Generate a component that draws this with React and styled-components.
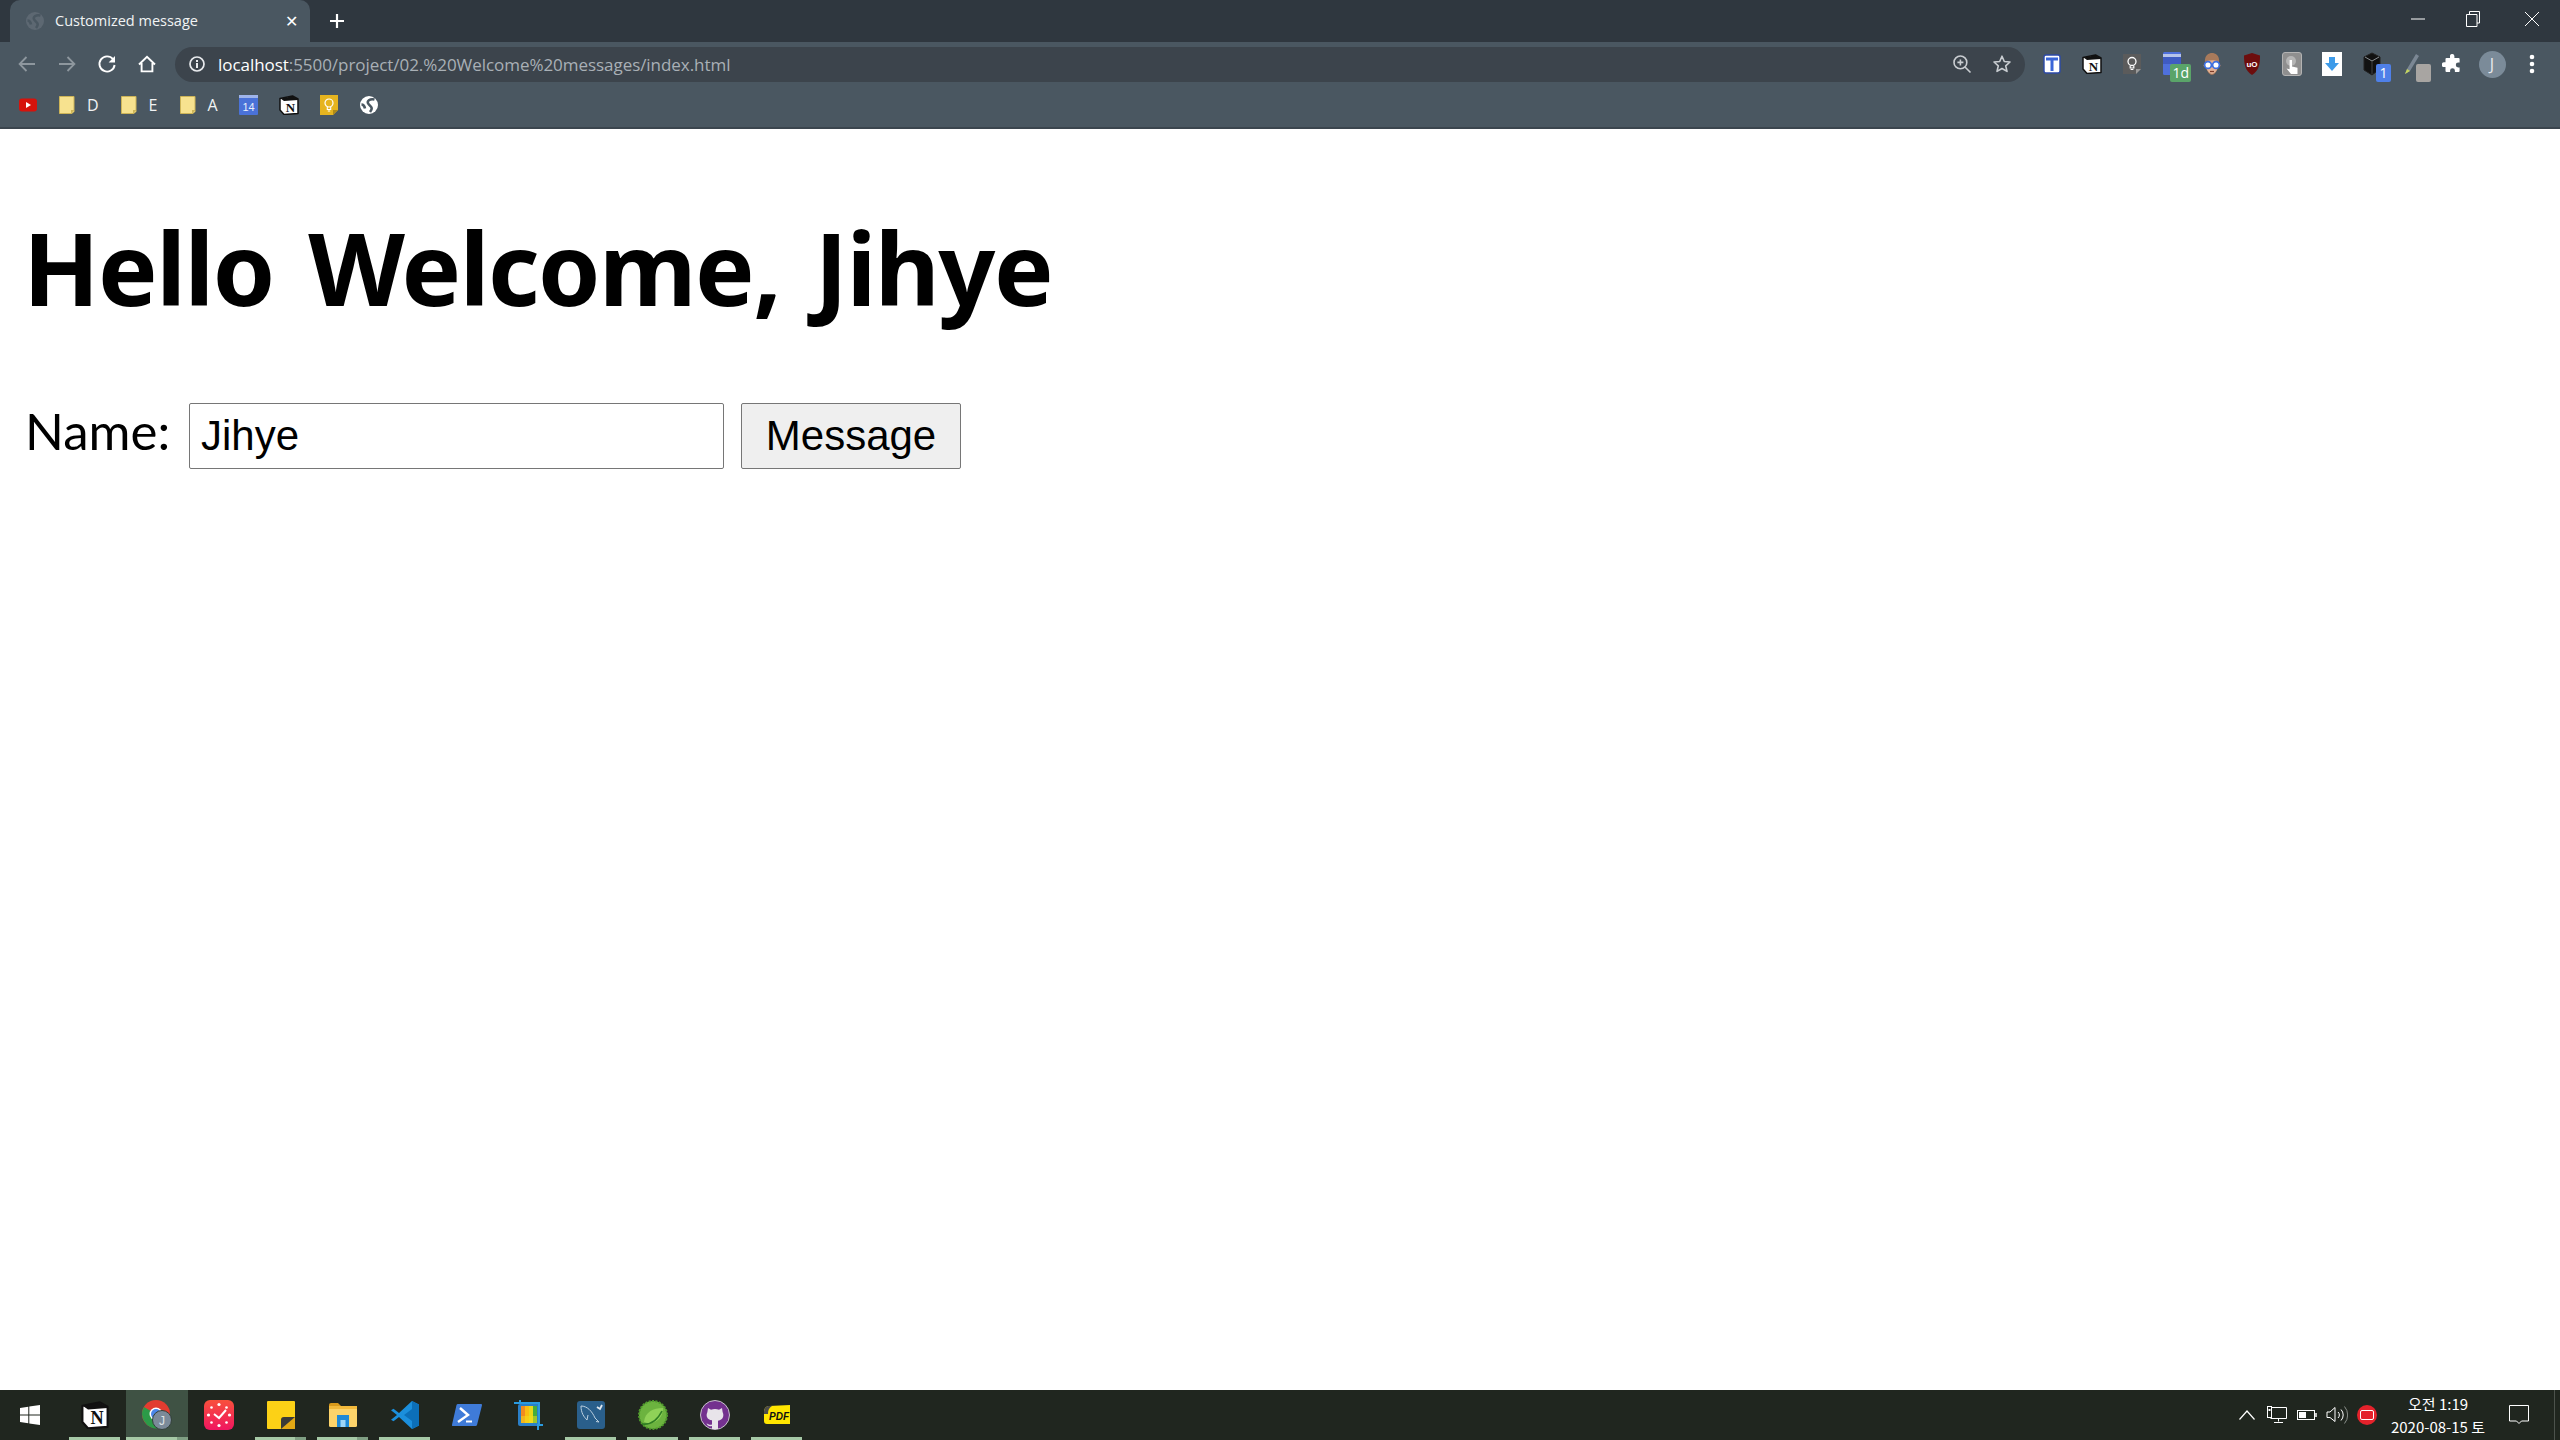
import React from 'react';
import styled, { createGlobalStyle } from 'styled-components';

const GlobalStyle = createGlobalStyle`
  html, body {
    margin: 0;
    padding: 0;
    background: #fff;
  }
  * {
    box-sizing: border-box;
  }
`;

const uiFont = `"Open Sans", "Noto Sans", "Noto Sans CJK KR", sans-serif`;

const Globe = ({ color = '#fff', land = '#4a5761' }) => (
  <svg width="18" height="18" viewBox="0 0 18 18">
    <circle cx="9" cy="9" r="9" fill={color} />
    <path d="M14.500 3.500C10 2.500 6 5 8.500 8s5 3.500 1.500 8M1.500 8.500c2 0 3 1.500 3.500 4" fill="none" stroke={land} strokeWidth="2.600" />
  </svg>
);

const NotionLogo = ({ size = 20 }) => (
  <svg width={size} height={size} viewBox="0 0 20 20">
    <path d="M1 3.500L13.500 1 19 4v14.500l-14 1L1 15z" fill="#fff" stroke="#111" strokeWidth="1.500" strokeLinejoin="round" />
    <path d="M1.500 3.500L5 6l14-1V4.200L13.500 1.200z" fill="#111" />
    <text x="11.500" y="16.500" textAnchor="middle" fontFamily="Liberation Serif, serif" fontWeight="700" fontSize="13" fill="#111">N</text>
  </svg>
);

const BackIcon = () => (
  <svg width="20" height="20" viewBox="0 0 20 20" fill="none" stroke="#8e979e" strokeWidth="1.800">
    <path d="M18 10H3M9.500 3L2.600 10l6.900 7" />
  </svg>
);

const ForwardIcon = () => (
  <svg width="20" height="20" viewBox="0 0 20 20" fill="none" stroke="#8e979e" strokeWidth="1.800">
    <path d="M2 10h15M10.500 3l6.900 7-6.900 7" />
  </svg>
);

const ReloadIcon = () => (
  <svg width="20" height="20" viewBox="0 0 20 20" fill="none">
    <path d="M16 5.200A7.600 7.600 0 1 0 17.600 11" stroke="#fff" strokeWidth="1.900" />
    <path d="M18 2v6.400h-6.400z" fill="#fff" />
  </svg>
);

const HomeIcon = () => (
  <svg width="20" height="20" viewBox="0 0 20 20" fill="none" stroke="#fff" strokeWidth="1.900">
    <path d="M2 10.500L10 2.800l8 7.700M4.600 9v8.400h10.800V9" />
  </svg>
);

const InfoIcon = () => (
  <svg width="18" height="18" viewBox="0 0 18 18" fill="none">
    <circle cx="9" cy="9" r="7" stroke="#e8eaed" strokeWidth="1.700" />
    <rect x="8" y="8" width="2" height="5" fill="#e8eaed" />
    <rect x="8" y="5" width="2" height="2" fill="#e8eaed" />
  </svg>
);

const ZoomIcon = () => (
  <svg width="20" height="20" viewBox="0 0 20 20" fill="none" stroke="#c9cdd1" strokeWidth="1.600">
    <circle cx="8.400" cy="8.400" r="6.400" />
    <path d="M13 13l5.500 5.500M5.400 8.400h6M8.400 5.400v6" />
  </svg>
);

const StarIcon = () => (
  <svg width="20" height="20" viewBox="0 0 20 20" fill="none" stroke="#c9cdd1" strokeWidth="1.600">
    <path d="M10 2.200l2.300 5.300 5.700.5-4.300 3.800 1.300 5.600L10 14.500l-5 2.900 1.300-5.600L2 8l5.700-.5z" strokeLinejoin="round" />
  </svg>
);

const TExtension = () => (
  <svg width="18" height="20" viewBox="0 0 18 20">
    <rect x="1" y="1" width="16" height="18" rx="2" fill="#fff" stroke="#2c4aa8" strokeWidth="1.400" />
    <path d="M3 3.500h12v3h-4.500V17h-3V6.500H3z" fill="#3b66d8" />
  </svg>
);

const KeepExtension = () => (
  <svg width="20" height="22" viewBox="0 0 20 22">
    <path d="M1 1h18v15l-5 5H1z" fill="#5b5b5b" />
    <path d="M14 21v-5h5z" fill="#9a9a9a" />
    <circle cx="10" cy="8.500" r="4" fill="none" stroke="#fff" strokeWidth="1.300" />
    <path d="M8.200 12.500v2.500h3.600v-2.500M8.600 16.500h2.800" fill="none" stroke="#fff" strokeWidth="1.200" />
  </svg>
);

const CalendarExtension = () => (
  <svg width="20" height="24" viewBox="0 0 20 24">
    <rect x="1" y="0" width="18" height="23" rx="1.500" fill="#4f70dc" />
    <rect x="1" y="2" width="18" height="3" fill="#b6c3ea" />
    <rect x="1" y="5" width="18" height="7" fill="#3f5bc2" />
  </svg>
);

const GlassesExtension = () => (
  <svg width="20" height="24" viewBox="0 0 20 24">
    <path d="M3 11C2 3 7 1 10 1s8 2 7 10l2 3-3 1c-1 5-4 8-6 8s-5-3-6-8l-3-1z" fill="#a87a5b" />
    <path d="M5 9c3-1 8-1 10 0l1 6c-1 4-4 7-6 7s-5-3-6-7z" fill="#e3b093" />
    <circle cx="6" cy="13" r="3.400" fill="#fff" stroke="#3d6fe0" strokeWidth="1.700" />
    <circle cx="14" cy="13" r="3.400" fill="#fff" stroke="#3d6fe0" strokeWidth="1.700" />
    <path d="M8 19.500h4" stroke="#7d3d2a" strokeWidth="1.200" />
  </svg>
);

const UblockExtension = () => (
  <svg width="18" height="24" viewBox="0 0 18 24">
    <path d="M9 1l8 2.600C17 12 16 19 9 23 2 19 1 12 1 3.600z" fill="#6d0d0d" />
    <text x="9" y="15" textAnchor="middle" fontFamily="Liberation Sans, sans-serif" fontWeight="700" fontSize="8" fill="#fff">uO</text>
  </svg>
);

const TouchExtension = () => (
  <svg width="20" height="24" viewBox="0 0 20 24">
    <rect x="0.500" y="0.500" width="19" height="23" rx="2.500" fill="#8f8f8f" stroke="#b3b3b3" />
    <circle cx="9" cy="9" r="5" fill="#b5b5b5" />
    <path d="M7.600 8h2.400v6.500l5.500 1.200V22H9l-4.500-5.500 3.100.8z" fill="#fff" />
  </svg>
);

const DownloadExtension = () => (
  <svg width="20" height="24" viewBox="0 0 20 24">
    <rect width="20" height="24" fill="#fff" />
    <path d="M7 5h6v6h4l-7 8-7-8h4z" fill="#3d9be9" />
  </svg>
);

const CubeExtension = () => (
  <svg width="18" height="24" viewBox="0 0 18 24">
    <path d="M9 1l8 4v12l-8 6-8-5V5z" fill="#111" stroke="#222" />
    <path d="M2 5l7 4 7-4" fill="none" stroke="#8a8f94" strokeWidth="1" />
    <path d="M9 9v13" stroke="#444" />
  </svg>
);

const PenExtension = () => (
  <svg width="16" height="24" viewBox="0 0 16 24">
    <path d="M1 22l2-5L12 2l3 2-9 15z" fill="#7b8794" />
    <path d="M1 22l2-5 3 2z" fill="#c6d65c" />
  </svg>
);

const PuzzleIcon = () => (
  <svg width="20" height="20" viewBox="0 0 20 20">
    <path d="M8 1.500a2.300 2.300 0 0 1 4.400.6V4h4.200a1 1 0 0 1 1 1v3.600h-1.400a2.400 2.400 0 0 0 0 4.800h1.400V17a1 1 0 0 1-1 1h-3.700v-1.400a2.400 2.400 0 0 0-4.800 0V18H4.500a1 1 0 0 1-1-1v-3.900H2.200a2.400 2.400 0 0 1 0-4.800h1.300V5a1 1 0 0 1 1-1H8z" fill="#fff" />
  </svg>
);

const MenuDots = () => (
  <svg width="6" height="22" viewBox="0 0 6 22" fill="#fff">
    <circle cx="3" cy="4" r="2.300" />
    <circle cx="3" cy="11" r="2.300" />
    <circle cx="3" cy="18" r="2.300" />
  </svg>
);

const Youtube = () => (
  <svg width="18" height="14" viewBox="0 0 18 14">
    <rect width="18" height="13" y="0.500" rx="3" fill="#d6130c" />
    <path d="M7 4l5 3-5 3z" fill="#fff" />
  </svg>
);

const Folder = () => (
  <svg width="16" height="18" viewBox="0 0 16 18">
    <path d="M.5.500h14.500v15l-2 2H.5z" fill="#f7e28f" stroke="#cdb457" />
    <path d="M12 17.500V14h3.500z" fill="#cdb457" />
  </svg>
);

const CalendarBookmark = () => (
  <svg width="19" height="20" viewBox="0 0 19 20">
    <rect width="19" height="20" rx="1" fill="#4a72d8" />
    <rect width="19" height="3" fill="#9fb4ea" />
    <text x="9.500" y="16" textAnchor="middle" fontFamily="Liberation Sans, sans-serif" fontSize="11" fill="#e8eefc">14</text>
  </svg>
);

const KeepBookmark = () => (
  <svg width="20" height="20" viewBox="0 0 20 20">
    <path d="M1 0h18v15l-5 5H1z" fill="#e6b41f" />
    <path d="M14 20v-5h5z" fill="#b08a17" />
    <circle cx="10" cy="8" r="4" fill="none" stroke="#fff" strokeWidth="1.200" />
    <path d="M8.300 12v2.500h3.400V12M8.800 16h2.400" fill="none" stroke="#fff" strokeWidth="1.100" />
  </svg>
);

const WindowsLogo = () => (
  <svg width="20" height="20" viewBox="0 0 20 20" fill="#fff">
    <path d="M0 3l8.300-1.200v7.700H0zM9.300 1.600L20 0v9.500H9.300zM0 10.500h8.300v7.700L0 17zM9.300 10.500H20V20L9.300 18.400z" />
  </svg>
);

const ChromeLogo = () => (
  <svg width="32" height="32" viewBox="0 0 32 32">
    <circle cx="15" cy="15" r="14" fill="#e23c30" />
    <path d="M15 15L3 22A14 14 0 0 1 3 8z M3 22l12-7 4 14A14 14 0 0 1 3 22z" fill="#2c9a48" />
    <path d="M15 15h14a14 14 0 0 1-10 13z" fill="#f8c92c" />
    <circle cx="15" cy="15" r="6.500" fill="#fff" />
    <circle cx="15" cy="15" r="5" fill="#4a86e8" />
    <circle cx="21" cy="21" r="9.500" fill="#7b8a99" stroke="#33403a" />
    <text x="21" y="25.500" textAnchor="middle" fontFamily="Liberation Sans, sans-serif" fontSize="12" fill="#dfe3e6">J</text>
  </svg>
);

const ClockApp = () => (
  <svg width="30" height="30" viewBox="0 0 30 30">
    <defs>
      <linearGradient id="clockFill" x1="0" y1="0" x2="0" y2="1">
        <stop offset="0" stopColor="#f8503c" />
        <stop offset="1" stopColor="#f01660" />
      </linearGradient>
    </defs>
    <rect width="30" height="30" rx="6" fill="url(#clockFill)" />
    <g fill="#fff">
      <circle cx="15" cy="4.500" r="1.600" />
      <circle cx="15" cy="25.500" r="1.600" />
      <circle cx="4.500" cy="15" r="1.600" />
      <circle cx="25.500" cy="15" r="1.600" />
      <circle cx="7.500" cy="7.500" r="1.300" />
      <circle cx="22.500" cy="7.500" r="1.300" />
      <circle cx="7.500" cy="22.500" r="1.300" />
      <circle cx="22.500" cy="22.500" r="1.300" />
    </g>
    <path d="M10 14l5 4 7-8" fill="none" stroke="#fff" strokeWidth="2" />
  </svg>
);

const StickyApp = () => (
  <svg width="28" height="28" viewBox="0 0 28 28">
    <path d="M1 0h26a1 1 0 0 1 1 1v26a1 1 0 0 1-1 1H1a1 1 0 0 1-1-1V1a1 1 0 0 1 1-1z" fill="#fcd116" />
    <path d="M14 28V19a3 3 0 0 1 3-3h11v11a1 1 0 0 1-1 1z" fill="#e3a814" />
    <path d="M14 28V19a3 3 0 0 1 3-3h11z" fill="#3a3a38" />
  </svg>
);

const FilesApp = () => (
  <svg width="28" height="24" viewBox="0 0 28 24">
    <path d="M0 2a2 2 0 0 1 2-2h7l3 3h-12z" fill="#d99a1c" />
    <rect y="3" width="28" height="21" rx="1.500" fill="#fcd36a" />
    <rect x="0" y="3" width="28" height="3" fill="#f2b93b" />
    <rect x="8" y="12" width="12" height="12" fill="#1f89d6" />
    <rect x="11.500" y="17" width="5" height="7" fill="#9fd5f5" />
  </svg>
);

const VsCode = () => (
  <svg width="30" height="30" viewBox="0 0 30 30">
    <path d="M22 1l7 3.400v21.200L22 29 9 17l-5.500 4.300L1 19.800 7 15 1 10.200l2.500-1.500L9 13z" fill="#1b8fdc" />
    <path d="M22 1l7 3.400v21.200L22 29V21l-8-6 8-6z" fill="#0c6fb8" />
  </svg>
);

const PowerShell = () => (
  <svg width="30" height="24" viewBox="0 0 30 24">
    <path d="M6 1h23a1 1 0 0 1 1 1.200L25 22a1.500 1.500 0 0 1-1.500 1H1a1 1 0 0 1-1-1.200L4.500 2A1.500 1.500 0 0 1 6 1z" fill="#3f7bd8" />
    <path d="M8 5l8 7-10 7" fill="none" stroke="#fff" strokeWidth="2.400" />
    <path d="M14 18.500h6" stroke="#fff" strokeWidth="2" />
  </svg>
);

const ColorApp = () => (
  <svg width="30" height="30" viewBox="0 0 30 30">
    <rect x="4" y="4" width="22" height="22" rx="2" fill="#2a7fc8" />
    <path d="M0 3h6V0M24 30v-5h5" fill="none" stroke="#2a9be0" strokeWidth="2" />
    <path d="M0 3h25v22" fill="none" stroke="#2a9be0" strokeWidth="2" />
    <rect x="7" y="6" width="4" height="17" fill="#f28b1f" />
    <rect x="11" y="6" width="4" height="17" fill="#fbbd11" />
    <rect x="15" y="6" width="4" height="17" fill="#e7d81c" />
    <rect x="19" y="6" width="4" height="17" fill="#45ad3c" />
    <rect x="7" y="16" width="16" height="7" fill="#f2e01c" opacity="0.500" />
  </svg>
);

const MySqlApp = () => (
  <svg width="28" height="28" viewBox="0 0 28 28">
    <rect width="28" height="28" rx="3" fill="#2a5f8b" />
    <path d="M4 5c6 0 11 5 14 12l4 4-3-.5M4 5c0 7 3 11 6 14l1-5" fill="none" stroke="#bcd0e0" strokeWidth="1" />
    <path d="M20 6l3 2 2-4" fill="none" stroke="#e0e8ee" strokeWidth="1.800" />
  </svg>
);

const SpringApp = () => (
  <svg width="30" height="30" viewBox="0 0 30 30">
    <circle cx="15" cy="15" r="14" fill="#6cb33f" stroke="#4f9a2c" strokeWidth="2" strokeDasharray="2 1.400" />
    <path d="M6 22C7 12 15 8 25 8c0 9-6 15-14 15-2 0-4-.5-5-1z" fill="#8fd158" />
    <path d="M4 24c8 1 15-3 20-13" fill="none" stroke="#2f7d23" strokeWidth="1.600" />
  </svg>
);

const GithubApp = () => (
  <svg width="30" height="30" viewBox="0 0 30 30">
    <circle cx="15" cy="15" r="14.500" fill="#74318f" stroke="#c7c1cb" />
    <path d="M8 8l3 1.800a11 11 0 0 1 8 0L22 8l.6 4c1.800 3.800.4 8-4.600 8.700V29h-6v-3c-3 .8-4.500-.5-5.500-2.500 1.500.3 3 2 5.500 1v-4.300C7 19.800 5.600 15.800 7.400 12z" fill="#e8e4ea" />
  </svg>
);

const PdfApp = () => (
  <svg width="26" height="20" viewBox="0 0 26 20">
    <path d="M0 8C0 3 2 1 5 1l21-1v19H3a3 3 0 0 1-3-3z" fill="#ffe600" />
    <path d="M0 8C0 3 2 1 5 1h3C5 3 4 5 4 9H0z" fill="#4b4b4b" />
    <text x="15" y="14.500" textAnchor="middle" fontFamily="Liberation Sans, sans-serif" fontWeight="700" fontStyle="italic" fontSize="10" fill="#111">PDF</text>
  </svg>
);

const TrayChevron = () => (
  <svg width="18" height="12" viewBox="0 0 18 12" fill="none" stroke="#fff" strokeWidth="1.200">
    <path d="M1.500 10.500L9 2l7.500 8.500" />
  </svg>
);

const TrayNetwork = () => (
  <svg width="20" height="18" viewBox="0 0 20 18" fill="none" stroke="#fff">
    <path d="M4.500 1.500H19.500V12.500H3.500M11.500 12.500v3M7 16.500h9" />
    <rect x="0.500" y="0.500" width="4" height="11" fill="#20261f" />
    <rect x="1.500" y="3" width="2" height="2" fill="#fff" stroke="none" />
  </svg>
);

const TrayBattery = () => (
  <svg width="20" height="12" viewBox="0 0 20 12" fill="none" stroke="#fff">
    <rect x="0.500" y="1.500" width="17" height="9" />
    <rect x="2" y="3" width="7" height="6" fill="#fff" stroke="none" />
    <path d="M19 4v4" strokeWidth="1.500" />
  </svg>
);

const TrayVolume = () => (
  <svg width="22" height="20" viewBox="0 0 22 20" fill="none" stroke="#fff">
    <path d="M1 7h3l5-4.500v14L4 12.500H1z" />
    <path d="M12 7a4 4 0 0 1 0 6M15 4.500a8 8 0 0 1 0 11" />
    <path d="M18.500 1.500a13 13 0 0 1 0 17" stroke="#8a8f8a" />
  </svg>
);

const TrayRecord = () => (
  <svg width="20" height="20" viewBox="0 0 20 20">
    <circle cx="10" cy="10" r="10" fill="#e4222b" />
    <rect x="3.500" y="5.500" width="13" height="9" rx="1.500" fill="#e4222b" stroke="#fff" />
  </svg>
);

const NotifyIcon = () => (
  <svg width="20" height="20" viewBox="0 0 20 20" fill="none" stroke="#fff">
    <path d="M.5.500h19v15.500h-7l-2.500 2.500L7.500 16h-7z" />
  </svg>
);

const App = () => (
  <Page>
    <GlobalStyle />
    <Browser>
      <TitleBar>
        <Tab>
          <Favicon>
            <Globe color="#5d6872" land="#4a5761" />
          </Favicon>
          <TabTitle>Customized message</TabTitle>
          <TabClose>✕</TabClose>
        </Tab>
        <NewTab>
          <svg width="16" height="16" viewBox="0 0 16 16" stroke="#fff" strokeWidth="2.200">
            <path d="M8 1v14M1 8h14" />
          </svg>
        </NewTab>
        <WindowControls>
          <WindowButton>
            <svg width="14" height="2" viewBox="0 0 14 2"><path d="M0 1h14" stroke="#fff" /></svg>
          </WindowButton>
          <WindowButton $nudge>
            <svg width="14" height="16" viewBox="0 0 14 16" fill="none" stroke="#fff">
              <path d="M3.500 3V.5h10V12H11M.5 3.500h10.500v12H.5z" />
            </svg>
          </WindowButton>
          <WindowButton>
            <svg width="14" height="14" viewBox="0 0 14 14"><path d="M0 0l14 14M14 0L0 14" stroke="#fff" /></svg>
          </WindowButton>
        </WindowControls>
      </TitleBar>
      <Toolbar>
        <ToolSlot><BackIcon /></ToolSlot>
        <ToolSlot><ForwardIcon /></ToolSlot>
        <ToolSlot><ReloadIcon /></ToolSlot>
        <ToolSlot><HomeIcon /></ToolSlot>
        <Omnibox>
          <InfoSlot><InfoIcon /></InfoSlot>
          <Url>
            <strong>localhost</strong>:5500/project/02.%20Welcome%20messages/index.html
          </Url>
          <OmniActions>
            <ToolSlot><ZoomIcon /></ToolSlot>
            <ToolSlot><StarIcon /></ToolSlot>
          </OmniActions>
        </Omnibox>
        <Extensions>
          <ToolSlot><TExtension /></ToolSlot>
          <ToolSlot><NotionLogo /></ToolSlot>
          <ToolSlot><KeepExtension /></ToolSlot>
          <ToolSlot>
            <CalendarExtension />
            <Badge $color="#5aa469">1d</Badge>
          </ToolSlot>
          <ToolSlot><GlassesExtension /></ToolSlot>
          <ToolSlot><UblockExtension /></ToolSlot>
          <ToolSlot><TouchExtension /></ToolSlot>
          <ToolSlot><DownloadExtension /></ToolSlot>
          <ToolSlot>
            <CubeExtension />
            <Badge $color="#4f80e8">1</Badge>
          </ToolSlot>
          <ToolSlot>
            <PenExtension />
            <Badge $color="#a8a5a2" />
          </ToolSlot>
          <ToolSlot><PuzzleIcon /></ToolSlot>
          <ToolSlot><Avatar>J</Avatar></ToolSlot>
          <ToolSlot><MenuDots /></ToolSlot>
        </Extensions>
      </Toolbar>
      <BookmarkBar>
        <Bookmark><Youtube /></Bookmark>
        <Bookmark><Folder /><BookmarkLabel>D</BookmarkLabel></Bookmark>
        <Bookmark><Folder /><BookmarkLabel>E</BookmarkLabel></Bookmark>
        <Bookmark><Folder /><BookmarkLabel>A</BookmarkLabel></Bookmark>
        <Bookmark $iconOnly><CalendarBookmark /></Bookmark>
        <Bookmark $iconOnly><NotionLogo /></Bookmark>
        <Bookmark $iconOnly><KeepBookmark /></Bookmark>
        <Bookmark $iconOnly><Globe /></Bookmark>
      </BookmarkBar>
    </Browser>
    <Main>
      <Heading>Hello Welcome, Jihye</Heading>
      <NameForm>
        <NameLabel>Name:</NameLabel>
        <NameInput defaultValue="Jihye" />
        <MessageButton type="button">Message</MessageButton>
      </NameForm>
    </Main>
    <Taskbar>
      <StartButton><WindowsLogo /></StartButton>
      <TaskItem $running><NotionLogo size={28} /></TaskItem>
      <TaskItem $running $stacked $active><ChromeLogo /></TaskItem>
      <TaskItem><ClockApp /></TaskItem>
      <TaskItem $running $stacked><StickyApp /></TaskItem>
      <TaskItem $running $stacked><FilesApp /></TaskItem>
      <TaskItem $running><VsCode /></TaskItem>
      <TaskItem><PowerShell /></TaskItem>
      <TaskItem><ColorApp /></TaskItem>
      <TaskItem $running><MySqlApp /></TaskItem>
      <TaskItem $running><SpringApp /></TaskItem>
      <TaskItem $running><GithubApp /></TaskItem>
      <TaskItem $running><PdfApp /></TaskItem>
      <Tray>
        <TraySlot><TrayChevron /></TraySlot>
        <TraySlot><TrayNetwork /></TraySlot>
        <TraySlot><TrayBattery /></TraySlot>
        <TraySlot><TrayVolume /></TraySlot>
        <TraySlot><TrayRecord /></TraySlot>
        <Clock>
          <span>오전 1:19</span>
          <span>2020-08-15 토</span>
        </Clock>
        <NotifySlot><NotifyIcon /></NotifySlot>
        <ShowDesktop />
      </Tray>
    </Taskbar>
  </Page>
);

const Page = styled.div`
  display: flex;
  flex-direction: column;
  width: 2560px;
  height: 1440px;
  overflow: hidden;
  background: #fff;
`;

const Browser = styled.header`
  display: flex;
  flex-direction: column;
  flex: none;
  background: #4a5761;
  border-bottom: 2px solid #3b454e;
  font-family: ${uiFont};
`;

const TitleBar = styled.div`
  display: flex;
  align-items: flex-end;
  height: 42px;
  padding-left: 10px;
  background: #2f373f;
`;

const Tab = styled.div`
  display: flex;
  align-items: center;
  width: 300px;
  height: 42px;
  padding: 0 12px 0 16px;
  background: #4a5761;
  border-radius: 10px 10px 0 0;
`;

const Favicon = styled.span`
  display: flex;
  margin-right: 11px;
`;

const TabTitle = styled.span`
  flex: 1;
  margin-top: -2px;
  font-size: 14.5px;
  color: #f1f3f4;
  white-space: nowrap;
`;

const TabClose = styled.span`
  font-size: 16px;
  color: #fff;
`;

const NewTab = styled.span`
  display: flex;
  align-items: center;
  justify-content: center;
  width: 24px;
  height: 42px;
  margin-left: 15px;
`;

const WindowControls = styled.div`
  display: flex;
  margin-left: auto;
  height: 42px;
`;

const WindowButton = styled.span`
  display: flex;
  align-items: center;
  justify-content: center;
  width: 57px;
  height: 38px;
  padding-right: ${props => (props.$nudge ? '4px' : '0')};
`;

const Toolbar = styled.div`
  display: flex;
  align-items: center;
  height: 44px;
  padding: 0 8px 0 7px;
`;

const ToolSlot = styled.span`
  position: relative;
  display: flex;
  align-items: center;
  justify-content: center;
  flex: none;
  width: 40px;
  height: 36px;
`;

const Omnibox = styled.div`
  display: flex;
  align-items: center;
  flex: none;
  width: 1850px;
  height: 35px;
  margin: 0 7px 0 8px;
  padding-left: 13px;
  padding-right: 3px;
  background: #3c444c;
  border-radius: 18px;
`;

const InfoSlot = styled.span`
  display: flex;
  margin-right: 12px;
`;

const Url = styled.span`
  flex: 1;
  font-size: 17px;
  letter-spacing: -0.05px;
  color: #a9b0b6;
  white-space: nowrap;

  strong {
    font-weight: 400;
    color: #fff;
  }
`;

const OmniActions = styled.div`
  display: flex;
`;

const Extensions = styled.div`
  display: flex;
`;

const Badge = styled.span`
  position: absolute;
  right: 1px;
  bottom: 0;
  min-width: 15px;
  height: 18px;
  padding: 0 2px;
  background: ${props => props.$color};
  border-radius: 2px;
  font-size: 14px;
  line-height: 18px;
  text-align: center;
  color: #fff;
`;

const Avatar = styled.span`
  display: flex;
  align-items: center;
  justify-content: center;
  width: 27px;
  height: 27px;
  background: #7b8b99;
  border-radius: 50%;
  font-size: 16px;
  color: #e8eaed;
`;

const BookmarkBar = styled.nav`
  display: flex;
  align-items: center;
  height: 41px;
  padding: 0 0 3px 8px;
`;

const Bookmark = styled.span`
  display: flex;
  align-items: center;
  justify-content: ${props => (props.$iconOnly ? 'center' : 'flex-start')};
  flex: none;
  width: ${props => (props.$iconOnly ? '40px' : 'auto')};
  height: 28px;
  padding: ${props => (props.$iconOnly ? '0' : '0 11px')};
`;

const BookmarkLabel = styled.span`
  margin-left: 12px;
  font-size: 16px;
  color: #f1f3f4;
`;

const Main = styled.main`
  flex: 1;
  padding: 0 25px;
  color: #000;
`;

const Heading = styled.h1`
  margin: 68px 0 0 -2px;
  font-family: "Noto Sans", "Noto Sans CJK KR", sans-serif;
  font-size: 100px;
  line-height: 140px;
  font-weight: 700;
  letter-spacing: -1.5px;
  word-spacing: 10px;
  white-space: nowrap;
`;

const NameForm = styled.form`
  display: flex;
  align-items: flex-start;
  margin-top: 66px;
`;

const NameLabel = styled.label`
  width: 164px;
  font-family: Lato, "Noto Sans", sans-serif;
  font-size: 51px;
  line-height: 56px;
`;

const NameInput = styled.input`
  width: 535px;
  height: 66px;
  padding: 0 11px;
  background: #fff;
  border: 1px solid #767676;
  border-radius: 2px;
  outline: none;
  font-family: "Liberation Sans", Arial, sans-serif;
  font-size: 42px;
  color: #000;
`;

const MessageButton = styled.button`
  width: 220px;
  height: 66px;
  margin-left: 17px;
  padding: 0;
  background: #efefef;
  border: 1px solid #767676;
  border-radius: 2px;
  font-family: "Liberation Sans", Arial, sans-serif;
  font-size: 42px;
  color: #000;
`;

const Taskbar = styled.footer`
  display: flex;
  flex: none;
  height: 50px;
  background: #20261f;
  font-family: "Noto Sans CJK KR", "Noto Sans", sans-serif;
`;

const StartButton = styled.span`
  display: flex;
  align-items: center;
  justify-content: flex-start;
  width: 64px;
  padding-left: 20px;
`;

const TaskItem = styled.span`
  position: relative;
  display: flex;
  align-items: center;
  justify-content: center;
  flex: none;
  width: 62px;
  background: ${props => (props.$active ? '#3f5244' : 'transparent')};

  &::after {
    content: '';
    display: ${props => (props.$running ? 'block' : 'none')};
    position: absolute;
    bottom: 0;
    left: ${props => (props.$active ? '0' : '5px')};
    right: ${props => (props.$active ? '0' : '6px')};
    height: 3px;
    background: #a6c9a6;
    border-right: ${props => (props.$stacked ? '11px solid #7f9f83' : '0')};
  }
`;

const Tray = styled.div`
  display: flex;
  align-items: stretch;
  margin-left: auto;
`;

const TraySlot = styled.span`
  display: flex;
  align-items: center;
  justify-content: center;
  width: 30px;
`;

const Clock = styled.span`
  display: flex;
  flex-direction: column;
  align-items: center;
  justify-content: center;
  width: 112px;
  font-size: 15px;
  line-height: 23px;
  color: #fff;
  white-space: nowrap;
`;

const NotifySlot = styled.span`
  display: flex;
  align-items: center;
  justify-content: center;
  width: 50px;
`;

const ShowDesktop = styled.span`
  width: 6px;
  margin-left: 10px;
  border-left: 1px solid #4c524c;
`;

export default App;
